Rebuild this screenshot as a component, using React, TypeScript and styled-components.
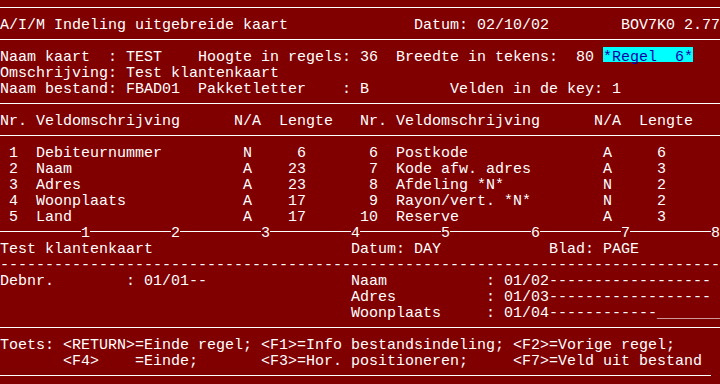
import React from "react";
import styled, { createGlobalStyle } from "styled-components";

const COL = 9;
const ROW = 16;

const GlobalStyle = createGlobalStyle`
  html, body {
    margin: 0;
    padding: 0;
    background: #800000;
  }
`;

const Screen = styled.div`
  width: ${80 * COL}px;
  height: ${24 * ROW}px;
  display: grid;
  grid-auto-rows: ${ROW}px;
  background: #800000;
  color: #ffffff;
  font-family: "Liberation Mono", "DejaVu Sans Mono", monospace;
  font-size: 15px;
  line-height: ${ROW}px;
  overflow: hidden;
`;

const Line = styled.div`
  white-space: pre;
  height: ${ROW}px;
  box-sizing: border-box;
  padding-top: 2px;
`;

const Rule = styled.div<{ $cols?: number }>`
  position: relative;
  height: ${ROW}px;
  &::after {
    content: "";
    position: absolute;
    left: 0;
    top: 7px;
    height: 1px;
    width: ${({ $cols }) => ($cols ?? 80) * COL}px;
    background: #ffffff;
  }
`;

const Ruler = styled.div`
  display: flex;
  height: ${ROW}px;
`;

const RulerDash = styled.span`
  width: ${9 * COL}px;
  height: 1px;
  margin-top: 7px;
  background: #ffffff;
`;

const RulerMark = styled.span`
  width: ${COL}px;
  box-sizing: border-box;
  padding-top: 2px;
  white-space: pre;
`;

const Highlight = styled.span`
  position: relative;
  z-index: 0;
  color: #0000a8;
  &::before {
    content: "";
    position: absolute;
    left: 0;
    right: 0;
    top: -2.5px;
    height: 15px;
    background: #00ffff;
    z-index: -1;
  }
`;

const sp = (s: string, col: number) => s.padEnd(col, " ");

type Field = [string, string, string, string];

const left: Field[] = [
  ["1", "Debiteurnummer", "N", "6"],
  ["2", "Naam", "A", "23"],
  ["3", "Adres", "A", "23"],
  ["4", "Woonplaats", "A", "17"],
  ["5", "Land", "A", "17"],
];

const right: Field[] = [
  ["6", "Postkode", "A", "6"],
  ["7", "Kode afw. adres", "A", "3"],
  ["8", "Afdeling *N*", "N", "2"],
  ["9", "Rayon/vert. *N*", "N", "2"],
  ["10", "Reserve", "A", "3"],
];

const fieldText = ([nr, name, na, len]: Field) =>
  nr.padStart(2, " ") + "  " + name.padEnd(23, " ") + na + len.padStart(6, " ");

const fieldRow = (i: number) =>
  sp(fieldText(left[i]), 40) + fieldText(right[i]);

const title =
  sp(sp("A/I/M Indeling uitgebreide kaart", 46) + "Datum: 02/10/02", 69) +
  "BOV7K0 2.77";

const naamKaart =
  sp(sp("Naam kaart  : TEST", 22) + "Hoogte in regels: 36", 44) +
  "Breedte in tekens:  80 ";

const naamBestand =
  sp(sp("Naam bestand: FBAD01", 22) + "Pakketletter    : B", 50) +
  "Velden in de key: 1";

const header =
  sp("Nr. Veldomschrijving      N/A  Lengte", 40) +
  "Nr. Veldomschrijving      N/A  Lengte";

const formTitle =
  sp(sp("Test klantenkaart", 39) + "Datum: DAY", 61) + "Blad: PAGE";

const formLine = (label: string, pos: string, tail: string, lead = "") =>
  sp(sp(lead, 39) + label, 54) + ": " + pos + tail;

const keys1 = "Toets: <RETURN>=Einde regel; <F1>=Info bestandsindeling; <F2>=Vorige regel;";
const keys2 = "       <F4>    =Einde;       <F3>=Hor. positioneren;     <F7>=Veld uit bestand";

export default function App() {
  return (
    <>
      <GlobalStyle />
      <Screen>
        <Rule />
        <Line>{title}</Line>
        <Rule />
        <Line>
          {naamKaart}
          <Highlight>*Regel  6*</Highlight>
        </Line>
        <Line>Omschrijving: Test klantenkaart</Line>
        <Line>{naamBestand}</Line>
        <Rule />
        <Line>{header}</Line>
        <Rule />
        {left.map((_, i) => (
          <Line key={i}>{fieldRow(i)}</Line>
        ))}
        <Ruler>
          {Array.from({ length: 8 }, (_, i) => (
            <React.Fragment key={i}>
              <RulerDash />
              <RulerMark>{i + 1}</RulerMark>
            </React.Fragment>
          ))}
        </Ruler>
        <Line>{formTitle}</Line>
        <Line>{"-".repeat(80)}</Line>
        <Line>
          {formLine("Naam", "01/02", "-".repeat(18), "Debnr.        : 01/01--")}
        </Line>
        <Line>{formLine("Adres", "01/03", "-".repeat(18))}</Line>
        <Line>
          {formLine("Woonplaats", "01/04", "-".repeat(12) + "_".repeat(7))}
        </Line>
        <Rule />
        <Line>{keys1}</Line>
        <Line>{keys2}</Line>
        <Rule $cols={79} />
      </Screen>
    </>
  );
}
